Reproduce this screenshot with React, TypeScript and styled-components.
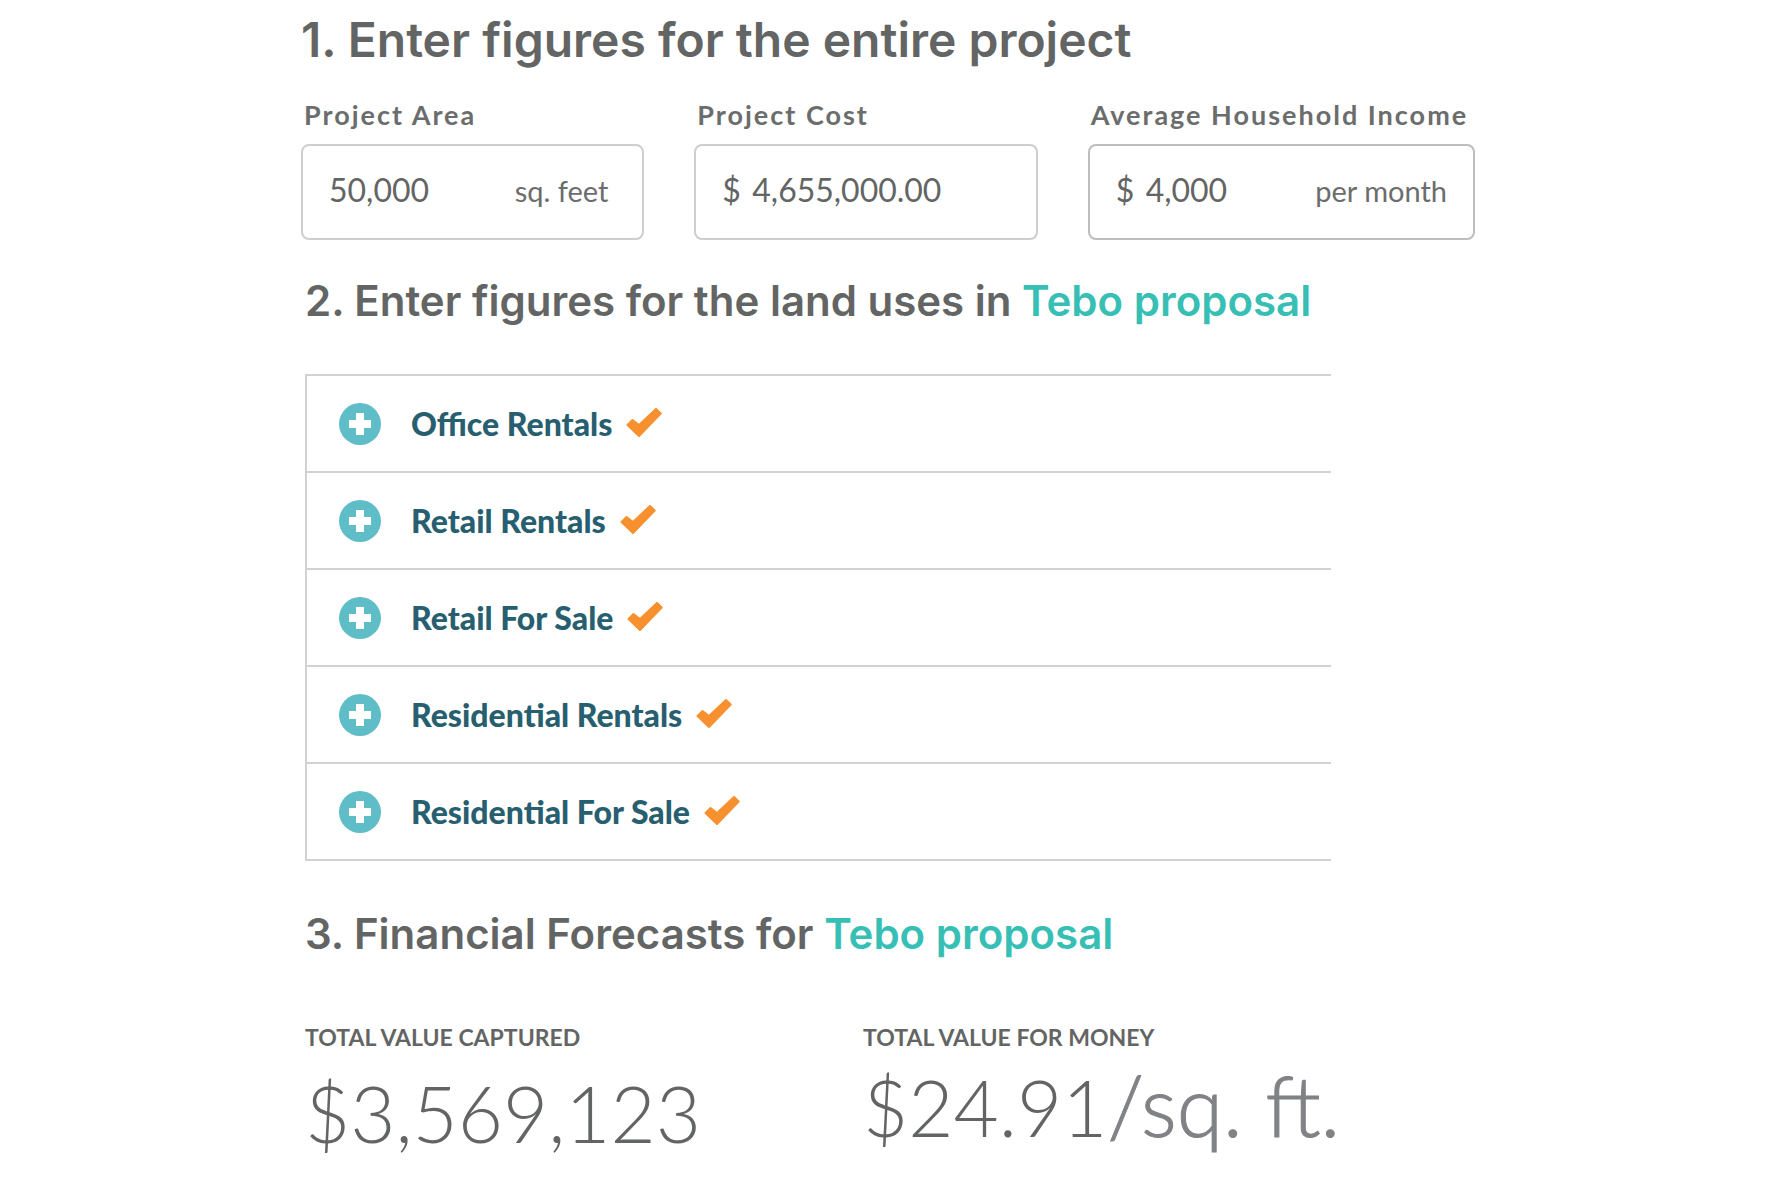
import React, { useState } from 'react';
import styled, { createGlobalStyle } from 'styled-components';

const color = {
  ink: '#636564',
  label: '#6b6d6c',
  teal: '#38bfb5',
  icon: '#5ebdc6',
  navy: '#285f70',
  orange: '#f7902f',
  line: '#d1d3d3',
  unit: '#808286',
};

const GlobalStyle = createGlobalStyle`
  *, *::before, *::after { box-sizing: border-box; }
  body {
    margin: 0;
    background: #fff;
    color: ${color.ink};
    font-family: Lato, "Open Sans", sans-serif;
  }
`;

const Page = styled.main`
  max-width: 1178px;
  margin: 0 auto;
  padding: 12px 0 24px 4px;
`;

const Section = styled.section<{ $gap: number }>`
  padding-left: 4px;
  margin-top: ${(p) => p.$gap}px;
`;

const Title = styled.h1`
  margin: 0;
  font: 600 48px/56px Inter, sans-serif;
`;

const Heading = styled.h2`
  margin: 0;
  font: 600 42px/54px Inter, sans-serif;
`;

const Accent = styled.span`
  color: ${color.teal};
`;

const Fields = styled.form`
  display: grid;
  grid-template-columns: 343fr 343fr 387fr;
  gap: 50px;
  margin-top: 31px;
`;

const Field = styled.div`
  display: flex;
  flex-direction: column;
  gap: 13px;
  min-width: 0;
`;

const FieldLabel = styled.label`
  padding-left: 3px;
  color: ${color.label};
  font-size: 27px;
  font-weight: 700;
  line-height: 32px;
  letter-spacing: 2px;
  white-space: nowrap;
`;

const FieldBox = styled.div<{ $strong?: boolean; $inset?: number }>`
  display: flex;
  align-items: baseline;
  height: 96px;
  padding: 24px ${(p) => p.$inset ?? 26}px 0 26px;
  border: 2px solid ${(p) => (p.$strong ? '#bdbdbd' : '#cdcecd')};
  border-radius: 8px;
  font-size: 32px;
  line-height: 40px;
`;

const Currency = styled.span`
  width: 30px;
  flex: none;
`;

const FieldInput = styled.input`
  flex: 1;
  min-width: 0;
  width: 0;
  height: 40px;
  padding: 0;
  border: 0;
  outline: 0;
  background: none;
  color: inherit;
  font: inherit;
`;

const Unit = styled.span`
  color: ${color.label};
  font-size: 29px;
  white-space: nowrap;
`;

const UseList = styled.ul`
  max-width: 1026px;
  margin: 46px 0 0;
  padding: 0;
  list-style: none;
  border: solid ${color.line};
  border-width: 2px 0 0 2px;
`;

const UseRow = styled.li`
  display: flex;
  align-items: center;
  gap: 14px;
  height: 97px;
  padding-left: 32px;
  border-bottom: 2px solid ${color.line};
`;

const UseButton = styled.button`
  display: flex;
  align-items: center;
  gap: 30px;
  padding: 0;
  border: 0;
  background: none;
  color: ${color.navy};
  font: 900 32px/40px Lato, sans-serif;
  cursor: pointer;
`;

const Stats = styled.dl`
  display: grid;
  grid-template-columns: 558px 1fr;
  margin: 62px 0 0;
`;

const Stat = styled.div<{ $gap: number }>`
  display: flex;
  flex-direction: column;
  gap: ${(p) => p.$gap}px;
`;

const StatLabel = styled.dt`
  font-size: 23px;
  font-weight: 700;
  line-height: 28px;
  text-transform: uppercase;
`;

const StatValue = styled.dd`
  margin: 0;
  font-size: 78px;
  font-weight: 300;
  line-height: 92px;
  white-space: nowrap;
`;

const StatUnit = styled.span`
  color: ${color.unit};
  font-size: 84px;
  -webkit-text-stroke: 1px ${color.unit};
`;

const PlusIcon = () => (
  <svg width="42" height="42" viewBox="0 0 42 42" aria-hidden="true">
    <circle cx="21" cy="21" r="21" fill={color.icon} />
    <path d="M21 10v22M10 21h22" stroke="#fff" strokeWidth="8" />
  </svg>
);

const CheckIcon = () => (
  <svg width="36" height="32" viewBox="0 0 36 32" role="img" aria-label="Complete">
    <path
      d="M1.5 17L6.5 12L13 17L30 0.9L34.7 5.5L13 28Z"
      fill={color.orange}
      stroke={color.orange}
      strokeWidth="2"
      strokeLinejoin="round"
    />
  </svg>
);

const landUses = [
  'Office Rentals',
  'Retail Rentals',
  'Retail For Sale',
  'Residential Rentals',
  'Residential For Sale',
];

export default function App() {
  const [area, setArea] = useState('50,000');
  const [cost, setCost] = useState('4,655,000.00');
  const [income, setIncome] = useState('4,000');

  return (
    <>
      <GlobalStyle />
      <Page>
        <Title>1. Enter figures for the entire project</Title>
        <Fields>
          <Field>
            <FieldLabel htmlFor="area">Project Area</FieldLabel>
            <FieldBox $inset={34}>
              <FieldInput id="area" value={area} onChange={(e) => setArea(e.target.value)} />
              <Unit>sq. feet</Unit>
            </FieldBox>
          </Field>
          <Field>
            <FieldLabel htmlFor="cost">Project Cost</FieldLabel>
            <FieldBox>
              <Currency>$</Currency>
              <FieldInput id="cost" value={cost} onChange={(e) => setCost(e.target.value)} />
            </FieldBox>
          </Field>
          <Field>
            <FieldLabel htmlFor="income">Average Household Income</FieldLabel>
            <FieldBox $strong>
              <Currency>$</Currency>
              <FieldInput id="income" value={income} onChange={(e) => setIncome(e.target.value)} />
              <Unit>per month</Unit>
            </FieldBox>
          </Field>
        </Fields>

        <Section $gap={34}>
          <Heading>
            2. Enter figures for the land uses in <Accent>Tebo proposal</Accent>
          </Heading>
          <UseList>
            {landUses.map((name) => (
              <UseRow key={name}>
                <UseButton type="button">
                  <PlusIcon />
                  {name}
                </UseButton>
                <CheckIcon />
              </UseRow>
            ))}
          </UseList>
        </Section>

        <Section $gap={46}>
          <Heading>
            3. Financial Forecasts for <Accent>Tebo proposal</Accent>
          </Heading>
          <Stats>
            <Stat $gap={16}>
              <StatLabel>Total value captured</StatLabel>
              <StatValue>$3,569,123</StatValue>
            </Stat>
            <Stat $gap={8}>
              <StatLabel>Total value for money</StatLabel>
              <StatValue>
                $24.91<StatUnit>/sq. ft.</StatUnit>
              </StatValue>
            </Stat>
          </Stats>
        </Section>
      </Page>
    </>
  );
}
